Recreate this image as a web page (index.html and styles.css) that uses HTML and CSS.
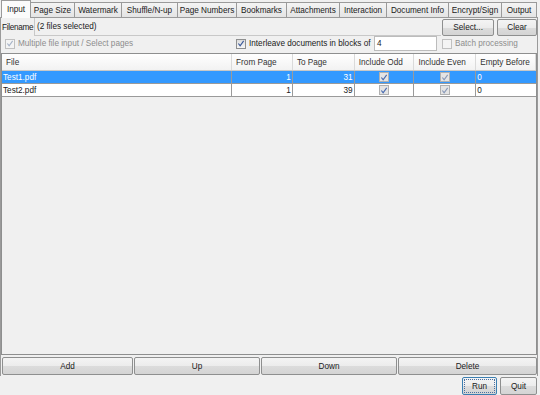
FILE: index.html
```html
<!DOCTYPE html>
<html lang="en">
<head>
    <meta charset="UTF-8">
    <title>PDF Input</title>
    <link rel="stylesheet" href="styles.css">
</head>
<body>
    <div class="window">
        <!-- tab strip -->
        <div class="tabs">
            <div class="tab active" style="width: 30px">Input</div>
            <div class="tab" style="width: 45px">Page Size</div>
            <div class="tab" style="width: 48px">Watermark</div>
            <div class="tab" style="width: 57px">Shuffle/N-up</div>
            <div class="tab" style="width: 60px">Page Numbers</div>
            <div class="tab" style="width: 51px">Bookmarks</div>
            <div class="tab" style="width: 54px">Attachments</div>
            <div class="tab" style="width: 48px">Interaction</div>
            <div class="tab" style="width: 63px">Document Info</div>
            <div class="tab" style="width: 54px">Encrypt/Sign</div>
            <div class="tab" style="width: 36px">Output</div>
        </div>

        <div class="pane">
            <div class="file-row">
                <span class="label">Filename</span>
                <div class="file-field">(2 files selected)</div>
                <button class="btn btn-select">Select...</button>
                <button class="btn btn-clear">Clear</button>
            </div>

            <div class="opt-row">
                <label class="check disabled opt-multi">
                    <span class="box"><svg width="9" height="9" viewBox="0 0 9 9"><path d="M1.5 4.5 L3.5 7 L7.5 1.5" fill="none" stroke="#a8b4c8" stroke-width="1.3"/></svg></span>
                    Multiple file input / Select pages
                </label>
                <label class="check opt-interleave">
                    <span class="box"><svg width="9" height="9" viewBox="0 0 9 9"><path d="M1.5 4.5 L3.5 7 L7.5 1.5" fill="none" stroke="#3c5a9a" stroke-width="1.3"/></svg></span>
                    Interleave documents in blocks of
                </label>
                <div class="num-field">4</div>
                <label class="check disabled opt-batch">
                    <span class="box"></span>
                    Batch processing
                </label>
            </div>

            <div class="table-wrap">
                <div class="row head">
                    <div class="cell c-file">File</div>
                    <div class="cell c-from">From Page</div>
                    <div class="cell c-to">To Page</div>
                    <div class="cell c-odd">Include Odd</div>
                    <div class="cell c-even">Include Even</div>
                    <div class="cell c-empty">Empty Before</div>
                </div>
                <div class="row selected">
                    <div class="cell c-file">Test1.pdf</div>
                    <div class="cell c-from num">1</div>
                    <div class="cell c-to num">31</div>
                    <div class="cell c-odd center"><span class="tbox"><svg width="9" height="9" viewBox="0 0 9 9"><path d="M1.5 4.5 L3.5 7 L7.5 1.5" fill="none" stroke="#4a6cb0" stroke-width="1.3"/></svg></span></div>
                    <div class="cell c-even center"><span class="tbox"><svg width="9" height="9" viewBox="0 0 9 9"><path d="M1.5 4.5 L3.5 7 L7.5 1.5" fill="none" stroke="#8a9ab8" stroke-width="1.3"/></svg></span></div>
                    <div class="cell c-empty">0</div>
                </div>
                <div class="row">
                    <div class="cell c-file">Test2.pdf</div>
                    <div class="cell c-from num">1</div>
                    <div class="cell c-to num">39</div>
                    <div class="cell c-odd center"><span class="tbox"><svg width="9" height="9" viewBox="0 0 9 9"><path d="M1.5 4.5 L3.5 7 L7.5 1.5" fill="none" stroke="#4a6cb0" stroke-width="1.3"/></svg></span></div>
                    <div class="cell c-even center"><span class="tbox"><svg width="9" height="9" viewBox="0 0 9 9"><path d="M1.5 4.5 L3.5 7 L7.5 1.5" fill="none" stroke="#8a9ab8" stroke-width="1.3"/></svg></span></div>
                    <div class="cell c-empty">0</div>
                </div>
            </div>

            <div class="btn-row">
                <button class="btn" style="width: 131px">Add</button>
                <button class="btn" style="width: 126px">Up</button>
                <button class="btn" style="width: 136px">Down</button>
                <button class="btn" style="width: 139px">Delete</button>
            </div>
        </div>

        <div class="footer">
            <button class="btn btn-run">Run</button>
            <button class="btn btn-quit">Quit</button>
        </div>
    </div>
</body>
</html>
```

FILE: styles.css
```css
:root {
    --bg: #f0f0f0;
    --border: #a0a0a0;
    --text: #1a1a1a;
    --select: #3399ff;
}

body {
    margin: 0;
    padding: 0;
    background: var(--bg);
    font-family: 'Liberation Sans', Arial, sans-serif;
    font-size: 8.2px;
    color: var(--text);
    overflow: hidden;
}

.window {
    width: 540px;
    height: 395px;
    display: flex;
    flex-direction: column;
}

/* 标签栏 */
.tabs {
    display: flex;
    align-items: flex-end;
    height: 17px;
    padding-left: 1px;
}

.tab {
    box-sizing: border-box;
    height: 15px;
    border: 1px solid #9a9a9a;
    border-bottom: none;
    margin-right: -1px;
    background: linear-gradient(#f4f4f4, #e4e4e4);
    display: flex;
    align-items: center;
    justify-content: center;
    white-space: nowrap;
}

.tab.active {
    background: #fbfbfb;
    position: relative;
    z-index: 1;
    margin-bottom: -1px;
    height: 18px;
}

.pane {
    box-sizing: border-box;
    width: 538px;
    border: 1px solid #9a9a9a;
    border-bottom: none;
    display: flex;
    flex-direction: column;
    height: 359px;
}

.file-row {
    display: flex;
    align-items: center;
    height: 18px;
}

.label {
    width: 32px;
    padding-left: 1px;
    letter-spacing: -0.3px;
    white-space: nowrap;
    overflow: hidden;
}

.file-field {
    box-sizing: border-box;
    width: 408px;
    height: 18px;
    border-left: 1px solid #c8c8c8;
    border-bottom: 1px solid #c8c8c8;
    padding-left: 2px;
    display: flex;
    align-items: center;
    background: var(--bg);
}

.btn {
    box-sizing: border-box;
    font-family: inherit;
    font-size: inherit;
    color: var(--text);
    border: 1px solid #8e8f8f;
    border-radius: 2px;
    background: linear-gradient(#f4f4f4 0%, #ececec 50%, #dcdcdc 51%, #d4d4d4 100%);
    padding: 0;
    height: 17px;
}

.btn-select {
    width: 52px;
    margin-left: 1px;
}

.btn-clear {
    width: 40px;
    margin-left: 3px;
}

.opt-row {
    display: flex;
    align-items: center;
    height: 15px;
}

.check {
    display: flex;
    align-items: center;
    gap: 3px;
    white-space: nowrap;
}

.check.disabled {
    color: #8d8d8d;
}

.box {
    box-sizing: border-box;
    width: 10px;
    height: 10px;
    border: 1px solid #8e8f8f;
    background: linear-gradient(#dcdcdc, #f6f6f6);
    display: flex;
    align-items: center;
    justify-content: center;
}

.check.disabled .box {
    border-color: #c0c0c0;
    background: #f4f4f4;
}

.opt-multi {
    margin-left: 4px;
    width: 231px;
}

.opt-interleave {
    width: 138px;
}

.num-field {
    box-sizing: border-box;
    width: 63px;
    height: 15px;
    background: #fff;
    border: 1px solid #bcbcbc;
    padding-left: 2px;
    display: flex;
    align-items: center;
    margin-right: 5px;
}

/* 表格 */
.table-wrap {
    box-sizing: border-box;
    margin-top: 2px;
    height: 302px;
    border: 1px solid #8e8f8f;
    background: var(--bg);
}

.row {
    display: flex;
    height: 13px;
    box-sizing: border-box;
    background: #fff;
    border-bottom: 1px solid #9a9a9a;
}

.row.head {
    height: 17px;
    background: linear-gradient(#ffffff, #f2f2f2);
    border-bottom: 1px solid #c8c8c8;
    color: #333;
}

.row.head .cell {
    border-right: 1px solid #dadada;
    padding-left: 4px;
}

.row.selected {
    background: var(--select);
    color: #fff;
}

.cell {
    box-sizing: border-box;
    border-right: 1px solid #9a9a9a;
    display: flex;
    align-items: center;
    padding: 0 1px;
    white-space: nowrap;
}

.cell.num {
    justify-content: flex-end;
}

.cell.center {
    justify-content: center;
}

.c-file { width: 231px; }
.c-from { width: 61px; }
.c-to { width: 62px; }
.c-odd { width: 60px; }
.c-even { width: 62px; }
.c-empty { width: 60px; border-right: none; }

.tbox {
    box-sizing: border-box;
    width: 10px;
    height: 10px;
    border: 1px solid #b0b0b0;
    background: #e4e4e4;
    display: flex;
    align-items: center;
    justify-content: center;
}

.btn-row {
    display: flex;
    gap: 1px;
    margin-top: 2px;
    padding-left: 1px;
}

.btn-row .btn {
    height: 18px;
}

.footer {
    display: flex;
    justify-content: flex-end;
    gap: 3px;
    padding-right: 3px;
    padding-top: 1px;
}

.btn-run {
    width: 35px;
    height: 18px;
    outline: 1px dotted #4a6ea0;
    outline-offset: -3px;
    border-color: #3c7fb1;
}

.btn-quit {
    width: 37px;
    height: 18px;
}
```
